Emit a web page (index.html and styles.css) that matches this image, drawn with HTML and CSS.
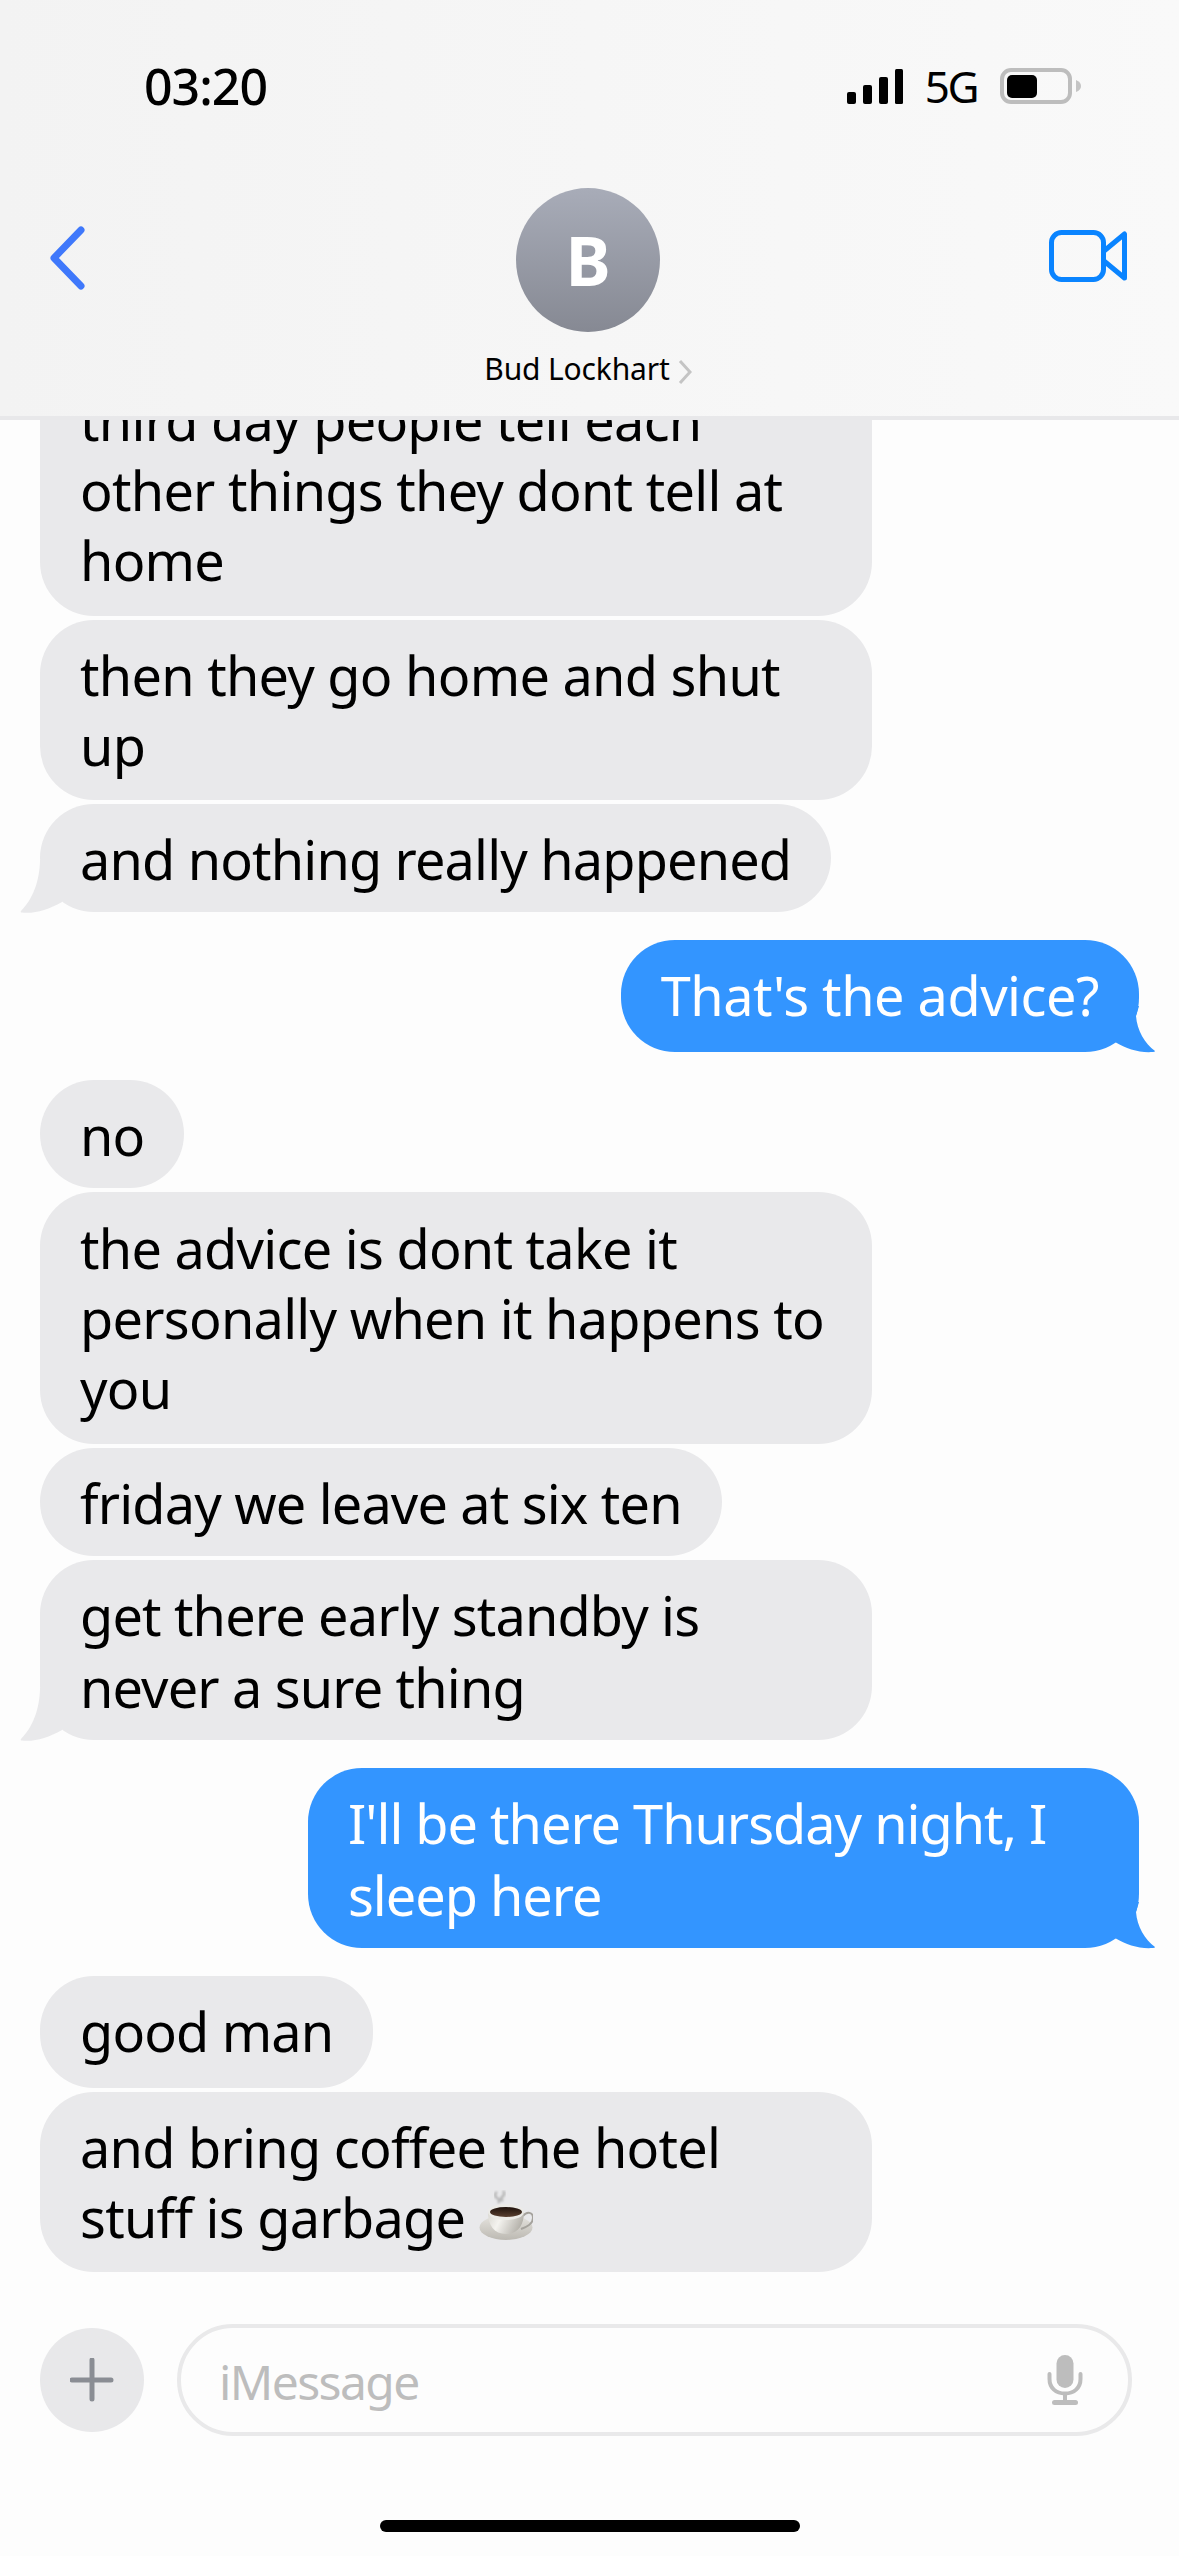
FILE: index.html
```html
<!DOCTYPE html>
<html lang="en">
<head>
    <meta charset="UTF-8">
    <meta name="viewport" content="width=device-width, initial-scale=1.0">
    <title>Bud Lockhart</title>
    <link rel="stylesheet" href="styles.css">
</head>
<body>
<div class="phone">
    <header class="top-bar">
        <div class="status-row">
            <span class="clock">03:20</span>
            <div class="status-icons">
                <svg class="signal" width="56" height="35" viewBox="0 0 56 35"><rect x="0" y="23" width="9" height="12" rx="2"/><rect x="16" y="16" width="9" height="19" rx="2"/><rect x="32" y="8" width="9" height="27" rx="2"/><rect x="48" y="0" width="8" height="35" rx="1.5"/></svg>
                <span class="network">5G</span>
                <svg class="battery" width="82" height="36" viewBox="0 0 82 36"><rect x="2" y="2" width="68" height="32" rx="9" fill="none" stroke="#bdbdbd" stroke-width="4"/><rect x="7" y="7" width="30" height="23" rx="5" fill="#000"/><path d="M76 12 Q81 14 81 18 Q81 22 76 24 Z" fill="#c4c4c4"/></svg>
            </div>
        </div>
        <nav class="nav-row">
            <svg class="back" width="38" height="64" viewBox="0 0 38 64"><path d="M32 4 L5 32 L32 60" fill="none" stroke="#3f78fb" stroke-width="7" stroke-linecap="round" stroke-linejoin="round"/></svg>
            <div class="contact">
                <div class="avatar">B</div>
                <div class="contact-name">Bud Lockhart <svg class="name-arrow" width="14" height="24" viewBox="0 0 14 24"><path d="M2 1 L12 12 L2 23" fill="none" stroke="#c4c4c4" stroke-width="3"/></svg></div>
            </div>
            <svg class="video" width="78" height="52" viewBox="0 0 78 52"><rect x="2.5" y="2.5" width="52" height="47" rx="10" fill="none" stroke="#0a84ff" stroke-width="5"/><path d="M55 21 L75.5 4 V48 L55 31" fill="none" stroke="#0a84ff" stroke-width="5" stroke-linejoin="round"/></svg>
        </nav>
    </header>

    <main class="thread">
        <div class="msg them snug three">third day people tell each other things they dont tell at home</div>
        <div class="msg them snug">then they go home and shut up</div>
        <div class="msg them last">and nothing really happened
            <svg class="tail" width="42" height="54" viewBox="0 0 42 54"><path d="M20 0 C20 14 16 36 1 51 Q0 52.5 2 52.5 C14 54 28 50 42 42 V0 Z"/></svg>
        </div>

        <div class="msg me tall">That's the advice?
            <svg class="tail" width="50" height="47" viewBox="0 0 50 47"><path d="M34 0 L31 10 C32 24 40 38 50 45 Q50 46 48 46 C34 47 22 43 10 36 V0 Z"/></svg>
        </div>

        <div class="msg them first">no</div>
        <div class="msg them snug three">the advice is dont take it personally when it happens to you</div>
        <div class="msg them">friday we leave at six ten</div>
        <div class="msg them last">get there early standby is never a sure thing
            <svg class="tail" width="42" height="54" viewBox="0 0 42 54"><path d="M20 0 C20 14 16 36 1 51 Q0 52.5 2 52.5 C14 54 28 50 42 42 V0 Z"/></svg>
        </div>

        <div class="msg me">I'll be there Thursday night, I sleep here
            <svg class="tail" width="50" height="47" viewBox="0 0 50 47"><path d="M34 0 L31 10 C32 24 40 38 50 45 Q50 46 48 46 C34 47 22 43 10 36 V0 Z"/></svg>
        </div>

        <div class="msg them first tall">good man</div>
        <div class="msg them snug last">and bring coffee the hotel stuff is garbage
            <svg class="coffee" width="54" height="50" viewBox="0 0 54 50">
                <defs>
                    <linearGradient id="cupFill" x1="0" x2="1" y1="0" y2="0.3"><stop offset="0" stop-color="#d9d7d1"/><stop offset="0.4" stop-color="#f4f3ef"/><stop offset="1" stop-color="#b5b2ab"/></linearGradient>
                    <linearGradient id="saucerFill" x1="0" x2="0" y1="0" y2="1"><stop offset="0" stop-color="#e6e4df"/><stop offset="1" stop-color="#bcb9b2"/></linearGradient>
                    <linearGradient id="brew" x1="0" x2="0" y1="0" y2="1"><stop offset="0" stop-color="#1f120c"/><stop offset="1" stop-color="#5a4030"/></linearGradient>
                    <filter id="soft"><feGaussianBlur stdDeviation="0.8"/></filter>
                </defs>
                <path class="steam" d="M18 2 Q14 5 18 8 Q22 10 19 13 M24 1 Q27 4 23 7 Q21 9 24 11" filter="url(#soft)"/>
                <ellipse cx="27" cy="37.5" rx="26.5" ry="12.5" fill="url(#saucerFill)"/>
                <path d="M44 26 C48 21 54 22 54 28 C54 33 48 37 42 39" fill="none" stroke="#a5a29c" stroke-width="2"/>
                <path d="M9 22 C9 35 15 44 27 44 C39 44 45 35 45 22 Z" fill="url(#cupFill)"/>
                <ellipse cx="27" cy="22" rx="18" ry="8" fill="#ecebe7"/>
                <ellipse cx="27" cy="22" rx="16" ry="5" fill="url(#brew)"/>
            </svg>
        </div>
    </main>

    <footer class="composer">
        <div class="plus-btn">
            <svg width="44" height="44" viewBox="0 0 44 44"><path d="M22 2 V41 M2 22 H41" stroke="#8a8d94" stroke-width="5" stroke-linecap="round"/></svg>
        </div>
        <div class="input-box">
            <span class="placeholder">iMessage</span>
            <svg class="mic" width="36" height="50" viewBox="0 0 36 50"><rect x="9.5" y="0" width="17" height="33" rx="8.5" fill="#bdbdbd"/><path d="M2.5 19 V24 C2.5 33 9 38.5 18 38.5 C27 38.5 33.5 33 33.5 24 V19" fill="none" stroke="#bdbdbd" stroke-width="4" stroke-linecap="round"/><path d="M18 38 V46" stroke="#bdbdbd" stroke-width="4"/><rect x="5" y="45" width="26" height="5" rx="2.5" fill="#bdbdbd"/></svg>
        </div>
    </footer>
    <div class="home-bar"><span class="home-line"></span></div>
</div>
</body>
</html>
```

FILE: styles.css
```css
* { box-sizing: border-box; }
html, body { margin: 0; padding: 0; }
body { width: 1179px; height: 2556px; overflow: hidden; background: #fdfdfd; font-family: "Noto Sans", "Open Sans", sans-serif; color: #000; }
.phone { width: 1179px; height: 2556px; display: flex; flex-direction: column; }

/* header */
.top-bar { height: 420px; flex: none; padding-top: 68px; background: linear-gradient(90deg, #f3f3f3, #f9f9f9); border-bottom: 4px solid #e8e8ea; position: relative; z-index: 2; }
.status-row { height: 36px; padding: 0 97px 0 144px; display: flex; justify-content: space-between; align-items: center; }
.clock { font-size: 50px; line-height: 36px; font-weight: 500; letter-spacing: -1px; }
.status-icons { display: flex; align-items: center; }
.signal { fill: #000; margin-right: 22px; }
.network { font-size: 44px; line-height: 36px; letter-spacing: -2.5px; margin-right: 23px; }
.nav-row { display: grid; grid-template-columns: 1fr auto 1fr; align-items: start; padding: 84px 52px 0 49px; }
.back { margin-top: 38px; }
.video { margin-top: 42px; justify-self: end; }
.contact { display: flex; flex-direction: column; align-items: center; }
.avatar { width: 144px; height: 144px; border-radius: 50%; background: linear-gradient(180deg, #a8acb8, #868993); color: #fff; font-size: 68px; font-weight: 700; line-height: 144px; text-align: center; }
.contact-name { margin-top: 17px; font-size: 30px; line-height: 40px; letter-spacing: -0.15px; display: flex; align-items: center; gap: 8px; white-space: nowrap; }
.name-arrow { margin-top: 5px; }

/* messages */
.thread { flex: 1; min-height: 0; overflow: hidden; display: flex; flex-direction: column; justify-content: flex-end; padding: 0 40px 52px; }
.msg { flex: none; position: relative; max-width: 832px; padding: 19px 40px 17px; border-radius: 54px; font-size: 54px; line-height: 72px; letter-spacing: -0.82px; margin-top: 4px; }
.msg.them { align-self: flex-start; background: #e9e9eb; color: #000; }
.msg.me { align-self: flex-end; max-width: 831px; background: #3395ff; color: #fff; margin-top: 28px; letter-spacing: -1px; }
.msg.first { margin-top: 28px; }
.msg.tall { min-height: 112px; }
.msg.me.tall { letter-spacing: -0.47px; }
.msg.snug { line-height: 70px; padding-top: 20px; padding-bottom: 20px; letter-spacing: -0.72px; }
.msg.three { min-height: 252px; padding-top: 21px; padding-bottom: 19px; }
.tail { position: absolute; }
.them .tail { left: -20px; bottom: -2px; fill: #e9e9eb; }
.me .tail { right: -16px; bottom: -1px; fill: #3395ff; }
.coffee { vertical-align: -2px; }
.steam { fill: none; stroke: #b5b5b5; stroke-width: 2.5; }

/* input */
.composer { flex: none; display: flex; align-items: center; gap: 33px; padding: 0 47px 0 40px; }
.plus-btn { width: 104px; height: 104px; flex: none; border-radius: 50%; background: #e8e8ea; display: flex; align-items: center; justify-content: center; }
.input-box { flex: 1; height: 112px; border: 4px solid #e9e9ea; border-radius: 56px; display: flex; align-items: center; justify-content: space-between; padding: 0 45px 0 38px; }
.placeholder { font-size: 48px; padding-top: 3px; color: #bdbdbd; letter-spacing: -1.6px; }
.home-bar { flex: none; height: 120px; padding-top: 84px; display: flex; justify-content: center; align-items: flex-start; }
.home-line { width: 420px; height: 12px; border-radius: 6px; background: #000; }
```
